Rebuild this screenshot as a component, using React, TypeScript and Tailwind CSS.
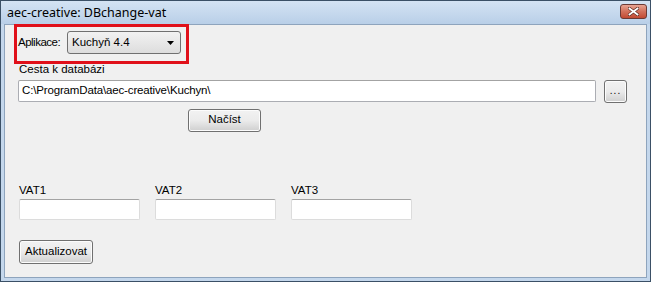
import React from "react";

const font = { fontFamily: '"Noto Sans", "Open Sans", sans-serif' };
const client = { fontFamily: '"Liberation Sans", Arial, sans-serif' };

function Btn({ children, className = "" }: { children: React.ReactNode; className?: string }) {
  return (
    <div
      className={
        "flex items-center justify-center rounded-[3px] border border-[#707070] bg-gradient-to-b from-[#f2f2f2] via-[#ebebeb] to-[#cfcfcf] text-[11.5px] text-black shadow-[inset_0_0_0_1px_#fcfcfc] " +
        className
      }
    >
      {children}
    </div>
  );
}

function Input({ className = "", value = "" }: { className?: string; value?: string }) {
  return (
    <div
      className={
        "flex items-center rounded-[2px] border border-[#abadb3] border-t-[#a3a3a3] bg-white pl-[3px] text-[11.5px] tracking-[-0.15px] text-black " + className
      }
    >
      {value}
    </div>
  );
}

export default function App() {
  return (
    <div style={font} className="relative h-[282px] w-[651px] overflow-hidden border border-[#3b5066] bg-[#c4d7ec] leading-none">
      {/* title bar */}
      <div className="flex h-[23px] items-center justify-between bg-gradient-to-b from-[#d4e3f3] to-[#b9cfe8] pl-[6px] pr-[3px]">
        <span className="pt-[1px] text-[12.5px] text-black">aec-creative: DBchange-vat</span>
        <div className="mb-[3px] flex h-[15px] w-[27px] items-center justify-center rounded-[3px] border border-[#6b3a35] bg-gradient-to-b from-[#e8a493] via-[#d2705b] to-[#c24a33]">
          <svg width="11" height="9" viewBox="0 0 11 9">
            <path d="M1.5 1.5 L9.5 7.5 M9.5 1.5 L1.5 7.5" stroke="#5a2a22" strokeWidth="3.2" strokeLinecap="square" />
            <path d="M1.5 1.5 L9.5 7.5 M9.5 1.5 L1.5 7.5" stroke="#ffffff" strokeWidth="1.8" strokeLinecap="square" />
          </svg>
        </div>
      </div>
      {/* client */}
      <div style={client} className="mx-[3px] mb-[3px] h-[254px] border border-[#8ea4bd] bg-[#f0f0f0] pl-[13px] pt-[6px]">
        <div className="flex items-center">
          <span className="w-[49px] text-[11.5px] tracking-[-0.5px] text-black">Aplikace:</span>
          <div className="flex h-[23px] w-[114px] items-center justify-between rounded-[3px] border border-[#707070] bg-gradient-to-b from-[#f2f2f2] to-[#dddddd] pl-[4px] pr-[6px] text-[11.5px] text-black">
            <span>Kuchyň 4.4</span>
            <svg width="7" height="4" viewBox="0 0 7 4">
              <path d="M0 0 H7 L3.5 4 Z" fill="#000" />
            </svg>
          </div>
        </div>
        <div className="mt-[10px] pl-[1px] text-[11.5px] text-black">Cesta k databázi</div>
        <div className="mt-[4px] flex items-center gap-[8px]">
          <Input className="h-[22px] w-[578px]" value="C:\ProgramData\aec-creative\Kuchyn\" />
          <Btn className="h-[23px] w-[23px]">
            <span className="text-[10px] tracking-[1px]">...</span>
          </Btn>
        </div>
        <Btn className="ml-[170px] mt-[6px] h-[23px] w-[73px]">Načíst</Btn>
        <div className="mt-[53px] flex gap-[15px]">
          {["VAT1", "VAT2", "VAT3"].map((v) => (
            <div key={v} className="flex w-[121px] flex-col">
              <span className="pl-[1px] text-[11.5px] text-black">{v}</span>
              <Input className="ml-[1px] mt-[3px] h-[21px] w-[121px] border-[#dcdcdc]" />
            </div>
          ))}
        </div>
        <Btn className="ml-[1px] mt-[20px] h-[24px] w-[74px]">Aktualizovat</Btn>
      </div>
      {/* annotation */}
      <div className="absolute left-[13px] top-[23px] h-[40px] w-[175px] border-[3px] border-[#e0101a]" />
    </div>
  );
}
